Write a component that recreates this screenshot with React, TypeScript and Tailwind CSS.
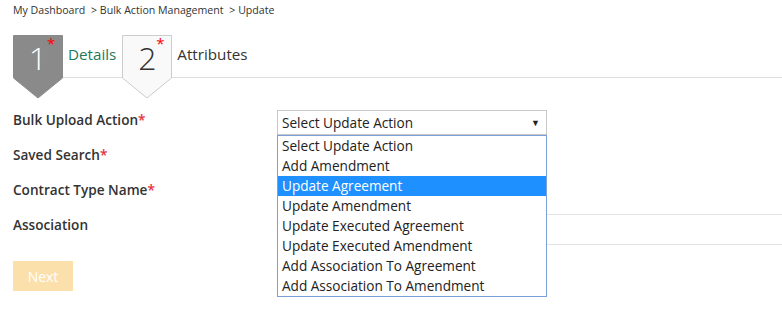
import React from "react";

const font = "font-['Open_Sans',sans-serif]";

const options = [
  "Select Update Action",
  "Add Amendment",
  "Update Agreement",
  "Update Amendment",
  "Update Executed Agreement",
  "Update Executed Amendment",
  "Add Association To Agreement",
  "Add Association To Amendment",
];

function StepBadge({ n, active }: { n: number; active: boolean }) {
  return (
    <div className="relative w-[50px] h-[64px] shrink-0">
      <svg width="50" height="64" className="absolute inset-0">
        <polygon
          points="0.5,0.5 49.5,0.5 49.5,43 25,63 0.5,43"
          fill={active ? "#8a8a8a" : "#f9f9f9"}
          stroke={active ? "#8a8a8a" : "#cccccc"}
        />
      </svg>
      <span
        className={`absolute left-0 w-[50px] top-[3px] text-center text-[32px] leading-[40px] font-light ${
          active ? "text-white" : "text-[#333]"
        }`}
      >
        {n}
      </span>
      <span className="absolute left-[34px] top-[1px] text-[15px] leading-[15px] text-[#f00]">*</span>
    </div>
  );
}

function Req() {
  return <span className="text-[#e8313b]">*</span>;
}

export default function App() {
  return (
    <div className={`w-[782px] h-[314px] bg-white overflow-hidden ${font} text-[#333]`}>
      {/* breadcrumb */}
      <div className="pl-[13px] pt-[2px] h-[35px] text-[10.6px] leading-[16px]">
        My Dashboard <span className="ml-[3px]">&gt;</span> Bulk Action Management{" "}
        <span className="ml-[3px]">&gt;</span> Update
      </div>

      {/* steps */}
      <div className="relative pl-[13px] h-[75px]">
        <div className="absolute left-[63px] right-0 top-[42px] h-px bg-[#dddddd]" />
        <div className="relative flex items-start">
          <StepBadge n={1} active />
          <span className="ml-[5px] mt-[9px] text-[15.2px] leading-[20px] text-[#1e7a5c]">Details</span>
          <div className="ml-[6px]">
            <StepBadge n={2} active={false} />
          </div>
          <span className="ml-[5px] mt-[9px] text-[15.2px] leading-[20px] text-[#333]">Attributes</span>
        </div>
      </div>

      {/* form */}
      <div className="pl-[13px] text-[13.6px]">
        <div className="flex h-[35px]">
          <div className="w-[264px] leading-[20px] font-semibold">
            Bulk Upload Action<Req />
          </div>
          <div className="relative w-[270px]">
            <div className="h-[25px] border border-[#c8c8c8] flex items-center justify-between pl-[4px] pr-[6px] text-[#222] leading-[20px]">
              <span>Select Update Action</span>
              <span className="text-[9px]">▼</span>
            </div>
            <div className="absolute left-0 top-[25px] w-[270px] z-10 bg-white border border-[#7b9fd8]">
              {options.map((o) => (
                <div
                  key={o}
                  className={`h-[20px] leading-[20px] pl-[4px] ${
                    o === "Update Agreement" ? "bg-[#1e90ff] text-white" : "text-[#222]"
                  }`}
                >
                  {o}
                </div>
              ))}
            </div>
          </div>
        </div>
        <div className="flex h-[35px]">
          <div className="w-[264px] leading-[20px] font-semibold">
            Saved Search<Req />
          </div>
        </div>
        <div className="flex h-[35px]">
          <div className="w-[264px] leading-[20px] font-semibold">
            Contract Type Name<Req />
          </div>
          <div className="flex-1 border-b border-[#e3e3e3]" />
        </div>
        <div className="flex h-[30px]">
          <div className="w-[264px] leading-[20px] font-semibold">Association</div>
          <div className="flex-1 border-b border-[#e3e3e3]" />
        </div>
        <button className="mt-[16px] w-[60px] h-[30px] bg-[#fbe0ab] text-white text-[14px]">Next</button>
      </div>
    </div>
  );
}
